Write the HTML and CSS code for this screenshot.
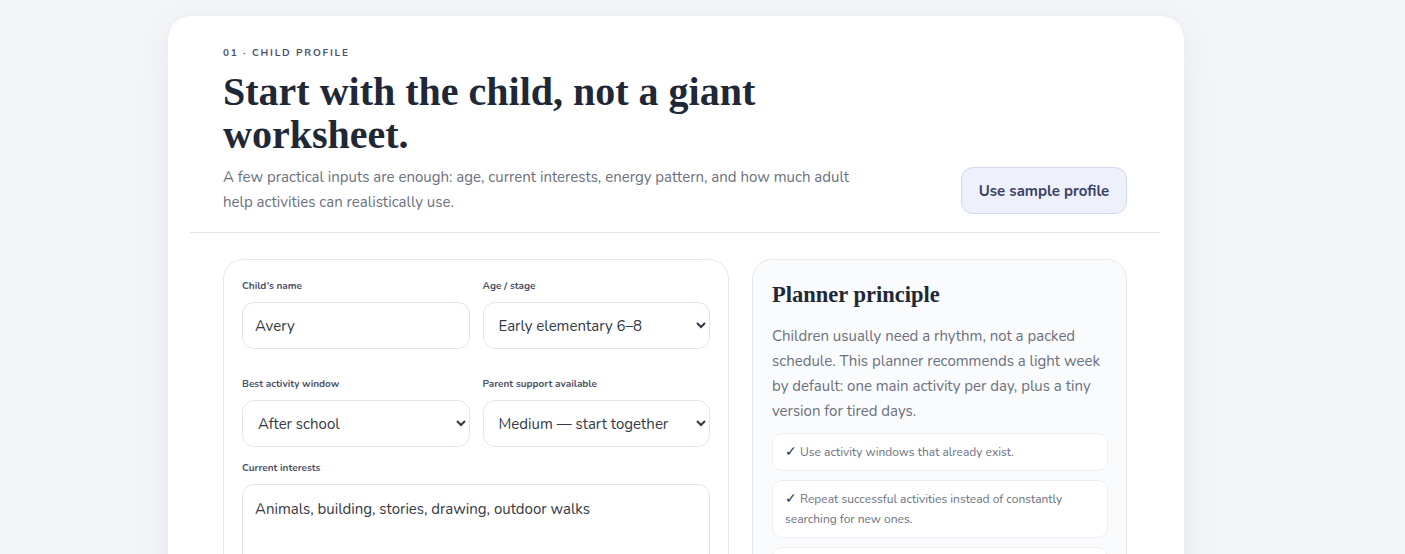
FILE: index.html
```html
<!DOCTYPE html>
<html lang="en">
<head>
<meta charset="utf-8">
<title>Child profile</title>
<link rel="stylesheet" href="styles.css">
</head>
<body>
<main class="card">
  <header class="head">
    <div class="head-text">
      <div class="eyebrow">01 · CHILD PROFILE</div>
      <h1 class="title">Start with the child, not a giant worksheet.</h1>
      <p class="lede">A few practical inputs are enough: age, current interests, energy pattern, and how much adult help activities can realistically use.</p>
    </div>
    <button class="btn-sample" type="button">Use sample profile</button>
  </header>
  <hr class="divider">
  <div class="grid">
    <section class="form-panel">
      <div class="row row-first">
        <label class="field">
          <span class="label">Child’s name</span>
          <input class="control" type="text" value="Avery">
        </label>
        <label class="field">
          <span class="label">Age / stage</span>
          <select class="control select">
            <option>Early elementary 6–8</option>
          </select>
        </label>
      </div>
      <div class="row">
        <label class="field">
          <span class="label">Best activity window</span>
          <select class="control select">
            <option>After school</option>
          </select>
        </label>
        <label class="field">
          <span class="label">Parent support available</span>
          <select class="control select">
            <option>Medium — start together</option>
          </select>
        </label>
      </div>
      <label class="field">
        <span class="label">Current interests</span>
        <textarea class="control area">Animals, building, stories, drawing, outdoor walks</textarea>
      </label>
    </section>
    <aside class="side-panel">
      <h2 class="side-title">Planner principle</h2>
      <p class="side-text">Children usually need a rhythm, not a packed schedule. This planner recommends a light week by default: one main activity per day, plus a tiny version for tired days.</p>
      <ul class="tips">
        <li class="tip"><span class="check">✓</span> Use activity windows that already exist.</li>
        <li class="tip"><span class="check">✓</span> Repeat successful activities instead of constantly searching for new ones.</li>
        <li class="tip"><span class="check">✓</span> Keep a tiny version ready for tired days.</li>
      </ul>
    </aside>
  </div>
</main>
</body>
</html>
```

FILE: styles.css
```css
* { box-sizing: border-box; }
html, body { margin: 0; padding: 0; }
body {
  background: #f4f5f8;
  font-family: "Nunito", "Lato", "Open Sans", sans-serif;
  color: #1f2837;
  padding-top: 15px;
}
.card {
  width: 1018px;
  margin-left: 167px;
  background: #ffffff;
  border-radius: 24px;
  border: 1px solid #eceef2;
  box-shadow: 0 10px 40px rgba(30, 40, 70, 0.06);
  padding: 30px 57px 40px 55px;
  min-height: 700px;
}
.head {
  display: flex;
  justify-content: space-between;
  align-items: flex-end;
}
.eyebrow {
  font-size: 10px;
  font-weight: 700;
  letter-spacing: 1.8px;
  color: #4a5170;
  margin-bottom: 10px;
}
.title {
  font-family: "Liberation Serif", "DejaVu Serif", serif;
  font-weight: 700;
  font-size: 40px;
  line-height: 43px;
  margin: 0 0 9px;
  color: #1f2837;
  max-width: 600px;
  letter-spacing: 0;
}
.lede {
  font-size: 15px;
  line-height: 25px;
  color: #6b7080;
  margin: 0;
  max-width: 640px;
}
.btn-sample {
  font-family: inherit;
  font-size: 15px;
  font-weight: 700;
  color: #3b4266;
  background: #eef0fb;
  border: 1px solid #d5d9ee;
  border-radius: 12px;
  width: 166px;
  height: 47px;
  margin-bottom: 1px;
}
.divider {
  border: 0;
  border-top: 1px solid #e3e5eb;
  margin: 17px -33px 26px;
}
.grid {
  display: grid;
  grid-template-columns: 506px 375px;
  gap: 23px;
}
.form-panel {
  border: 1px solid #e5e7ef;
  border-radius: 20px;
  padding: 19px 18px 19px 18px;
  display: flex;
  flex-direction: column;
  gap: 14px;
}
.row {
  display: grid;
  grid-template-columns: 1fr 1fr;
  gap: 13px;
}
.row-first { margin-bottom: 14px; }
.field {
  display: flex;
  flex-direction: column;
  gap: 9px;
}
.label {
  font-size: 10px;
  font-weight: 700;
  color: #4a5068;
}
.control {
  font-family: inherit;
  font-size: 15px;
  color: #333a45;
  height: 47px;
  border: 1px solid #e3e5ec;
  border-radius: 12px;
  background: #fff;
  padding: 0 12px;
}
.select { padding: 0 10px 0 11px; }
.area {
  height: 100px;
  padding: 14px 12px;
  resize: none;
}
.side-panel {
  border: 1px solid #e5e7ef;
  border-radius: 20px;
  background: #fafbfd;
  padding: 22px 18px 19px 19px;
}
.side-title {
  font-family: "Liberation Serif", "DejaVu Serif", serif;
  font-weight: 700;
  font-size: 22.5px;
  margin: 0 0 16px;
  color: #1f2837;
}
.side-text {
  font-size: 15px;
  line-height: 25px;
  color: #6b7080;
  margin: 0 0 9px;
}
.tips {
  list-style: none;
  margin: 0;
  padding: 0;
  display: flex;
  flex-direction: column;
  gap: 9px;
}
.tip {
  background: #fff;
  border: 1px solid #eceef3;
  border-radius: 10px;
  padding: 8px 12px 8px 12px;
  font-size: 12px;
  line-height: 20px;
  color: #6b7080;
}
.check { color: #2a3145; font-size: 14px; }
```
